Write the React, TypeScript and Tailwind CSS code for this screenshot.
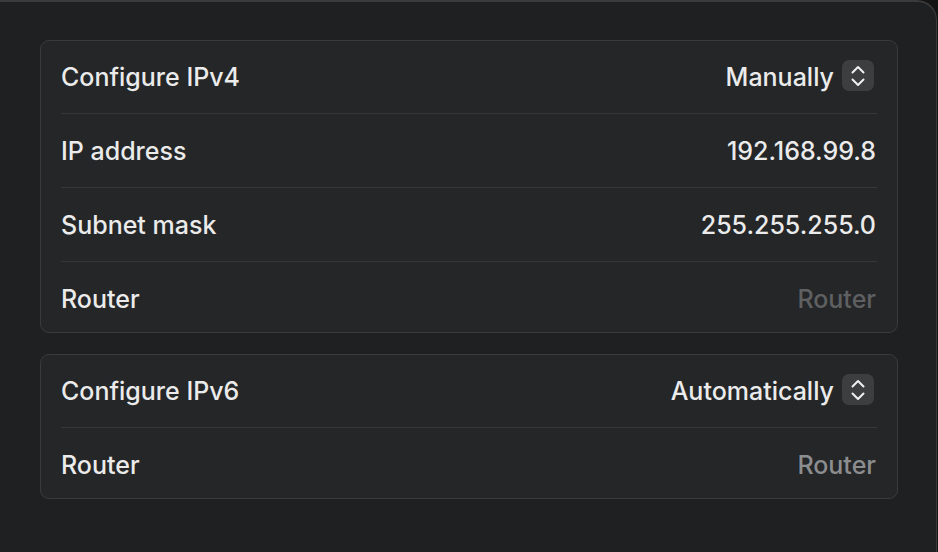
import React from 'react'

// ── Stepper (popup) button ─────────────────────────────────────────────────────

function Stepper() {
  return (
    <span className="ml-[8px] mr-[2px] w-[32px] h-[31px] rounded-[7px] bg-[#3d3e40] flex items-center justify-center -mt-[3px]">
      <svg width="16" height="24" viewBox="0 0 16 24" fill="none" stroke="#f0f0f0" strokeWidth="2" strokeLinecap="round" strokeLinejoin="round">
        <path d="M2.5 8.5L8 3l5.5 5.5" />
        <path d="M2.5 15.5L8 21l5.5-5.5" />
      </svg>
    </span>
  )
}

type Row = {
  label: string
  value: string
  h: string
  kind?: 'popup' | 'placeholder' | 'placeholder2'
}

// last rows sit a bit lower in their cell
const ipv4: Row[] = [
  { label: 'Configure IPv4', value: 'Manually', h: 'h-[72px]', kind: 'popup' },
  { label: 'IP address', value: '192.168.99.8', h: 'h-[73px]' },
  { label: 'Subnet mask', value: '255.255.255.0', h: 'h-[73px]' },
  { label: 'Router', value: 'Router', h: 'h-[70px] pt-[4px]', kind: 'placeholder' },
]

const ipv6: Row[] = [
  { label: 'Configure IPv6', value: 'Automatically', h: 'h-[72px]', kind: 'popup' },
  { label: 'Router', value: 'Router', h: 'h-[70px] pt-[4px]', kind: 'placeholder2' },
]

function Card({ rows }: { rows: Row[] }) {
  return (
    <div className="w-[858px] rounded-[9px] border border-[#3a3b3d] bg-[#242628]">
      {rows.map((r, i) => (
        <div key={r.label + i}>
          {i > 0 && <div className="mx-[20px] h-px bg-[#343638]" />}
          <div className={`${r.h} flex items-center justify-between pl-[20px] pr-[21px]`}>
            <span className="text-[#ebebeb]">{r.label}</span>
            <span className="flex items-center">
              <span
                className={
                  r.kind === 'placeholder'
                    ? 'text-[#5f6062]'
                    : r.kind === 'placeholder2'
                      ? 'text-[#8c8d8f]'
                      : 'text-[#ebebeb]'
                }
              >
                {r.value}
              </span>
              {r.kind === 'popup' && <Stepper />}
            </span>
          </div>
        </div>
      ))}
    </div>
  )
}

export default function App() {
  return (
    <div className="w-[938px] h-[552px] bg-[#141414] overflow-hidden" style={{ fontFamily: 'Inter, "Noto Sans", sans-serif' }}>
      <div className="w-[937px] h-[560px] bg-[#1f2022] border-t-2 border-r border-[#3a3a3b] rounded-tr-[20px] pt-[38px] pl-[40px] text-[25px] leading-[26px] font-[450] flex flex-col gap-[21px]">
        <Card rows={ipv4} />
        <Card rows={ipv6} />
      </div>
    </div>
  )
}
